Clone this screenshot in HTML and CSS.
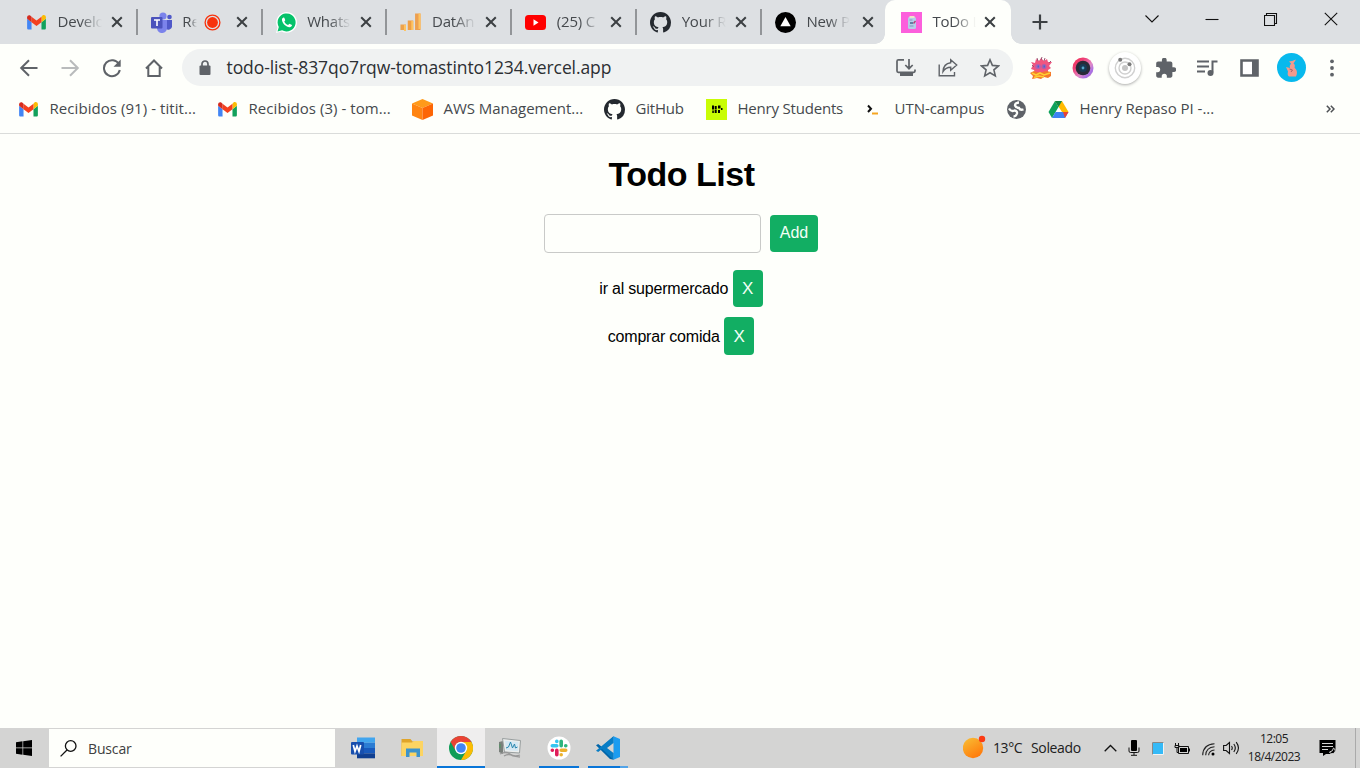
FILE: index.html
```html
<!DOCTYPE html>
<html lang="es">
<head>
<meta charset="utf-8">
<title>ToDo List</title>
<link rel="stylesheet" href="styles.css">
</head>
<body>
<svg class="defs" width="0" height="0">
  <defs>
    <linearGradient id="sun" x1="0" y1="0" x2=".6" y2="1"><stop offset="0" stop-color="#f8c136"/><stop offset="1" stop-color="#ff7b0c"/></linearGradient>
    <linearGradient id="lens" x1="0" y1="0" x2="1" y2="1"><stop offset="0" stop-color="#f5304f"/><stop offset=".3" stop-color="#ef3f76"/><stop offset=".6" stop-color="#e08ac8"/><stop offset=".8" stop-color="#a56fe8"/><stop offset="1" stop-color="#ffa05a"/></linearGradient>
  </defs>
  <symbol id="gmail" viewBox="0 0 20 16"><path fill="#4285f4" d="M1.500 15.500H4.700V7.600L0 4v10c0 .9.6 1.500 1.500 1.500z"/><path fill="#12a15c" d="M15.300 15.500h3.200c.9 0 1.500-.6 1.500-1.500V4l-4.700 3.600z"/><path fill="#fbbc04" d="M15.300 1.800v5.800L20 4V2.300c0-2-2.200-2.900-3.600-1.800z"/><path fill="#f4401f" d="M4.700 7.600V1.800L10 5.800l5.300-4v5.800L10 11.600z"/><path fill="#d52b1e" d="M0 2.300V4l4.700 3.600V1.800L3.600.7C2.200-.5 0 .4 0 2.300z"/></symbol>
  <symbol id="github" viewBox="0 0 16 16"><path fill="#24292f" d="M8 0C3.580 0 0 3.580 0 8c0 3.540 2.290 6.530 5.470 7.590.4.07.55-.17.55-.38 0-.19-.01-.82-.01-1.490-2.010.37-2.530-.49-2.690-.94-.09-.23-.48-.94-.82-1.130-.28-.15-.68-.52-.01-.53.63-.01 1.080.58 1.230.82.72 1.210 1.870.87 2.330.66.07-.52.28-.87.51-1.070-1.780-.2-3.640-.89-3.640-3.950 0-.87.31-1.590.82-2.150-.08-.2-.36-1.020.08-2.120 0 0 .67-.21 2.200.82.64-.18 1.320-.27 2-.27s1.360.09 2 .27c1.530-1.040 2.200-.82 2.200-.82.44 1.100.16 1.920.08 2.120.51.56.82 1.270.82 2.150 0 3.070-1.870 3.750-3.650 3.950.29.25.54.73.54 1.480 0 1.070-.01 1.930-.01 2.200 0 .21.15.46.55.38A8.010 8.010 0 0 0 16 8c0-4.420-3.580-8-8-8z"/></symbol>
  <symbol id="x" viewBox="0 0 12 12"><path d="M1.200 1.200l9.600 9.600M10.800 1.200L1.200 10.800" stroke="#3c4043" stroke-width="2" fill="none"/></symbol>
</svg>

<header class="browser">
  <div class="tabstrip">
    <div class="tab"><svg class="fav" viewBox="0 0 21 21"><use href="#gmail" x="1" y="3" width="19" height="15"/></svg><span class="title">Develo</span><svg class="close"><use href="#x"/></svg></div>
    <div class="tab"><svg class="fav" viewBox="0 0 21 21"><circle cx="12" cy="4" r="3.600" fill="#7b83eb"/><circle cx="18.500" cy="5" r="2.300" fill="#5059c9"/><path d="M15 8h6v7a4 4 0 0 1-6 2z" fill="#5059c9"/><path d="M6 8h10v7.500a5 5 0 0 1-10 1z" fill="#7b83eb"/><rect y="5" width="11.500" height="11.500" rx="1" fill="#4b53bc"/><path d="M3 8h6M6 8v6" stroke="#fff" stroke-width="1.600"/></svg><span class="title short">Re</span><svg class="rec" viewBox="0 0 17 17"><circle cx="8.500" cy="8.500" r="7.400" fill="none" stroke="#f8320c" stroke-width="1.300"/><circle cx="8.500" cy="8.500" r="5.400" fill="#f8320c"/></svg><svg class="close"><use href="#x"/></svg></div>
    <div class="tab"><svg class="fav" viewBox="0 0 21 21"><path d="M0 21l1.500-5.500A10.400 10.400 0 1 1 5.500 19.500z" fill="#fff"/><path d="M1.500 19.500l1.300-4.600a9 9 0 1 1 3.300 3.300z" fill="#05c26a"/><path d="M7.400 5.500c-1 .4-1.600 1.500-1.400 2.700.5 3.400 4.300 6.800 7.300 7 1.400.1 2.600-.7 2.700-2.100l-2.600-1.400-1.300 1.400c-1.800-.7-3-1.900-3.800-3.600l1-1.300-1-2.500z" fill="#fff"/></svg><span class="title">Whats</span><svg class="close"><use href="#x"/></svg></div>
    <div class="tab"><svg class="fav" viewBox="0 0 21 21"><g stroke-width="5.500" fill="none"><path d="M3.200 12.500V18" stroke="#eda24c"/><path d="M10.500 8.500V18" stroke="#ef9f45"/><path d="M17.800 1.500V18" stroke="#eda050"/></g><path d="M5 13v6M12.300 9v9M19.500 1.500V17" stroke="#ffc461" stroke-width="2"/></svg><span class="title">DatAn</span><svg class="close"><use href="#x"/></svg></div>
    <div class="tab"><svg class="fav" viewBox="0 0 21 21"><rect y="3" width="21" height="15" rx="3.500" fill="#f00"/><path d="M8.500 7.300l5 3.200-5 3.200z" fill="#fff"/></svg><span class="title">(25) C</span><svg class="close"><use href="#x"/></svg></div>
    <div class="tab"><svg class="fav"><use href="#github"/></svg><span class="title">Your R</span><svg class="close"><use href="#x"/></svg></div>
    <div class="tab last"><svg class="fav" viewBox="0 0 21 21"><circle cx="10.500" cy="10.500" r="10.500"/><path d="M10.500 5l5.200 9.300H5.300z" fill="#fff"/></svg><span class="title">New P</span><svg class="close"><use href="#x"/></svg></div>
    <div class="tab active"><svg class="fav" viewBox="0 0 21 21"><path fill="#fc5fdc" d="M0 0h21v21H0z"/><rect x="7" y="5" width="8" height="12" rx="1.500" fill="#b4cfe8"/><rect x="8.500" y="4" width="5" height="2" fill="#ede6c8"/><path d="M8.500 8h3M8.500 14h4" stroke="#8296bd"/><path d="M9 11h3" stroke="#3e5d86" stroke-width="1.400"/><path d="M12.500 11.500l2-2.500" stroke="#b53f78" stroke-width="1.400"/></svg><span class="title">ToDo L</span><svg class="close"><use href="#x"/></svg></div>
    <svg class="newtab" viewBox="0 0 16 16"><path d="M8 .5v15M.5 8h15" stroke="#3c4043" stroke-width="2.200"/></svg>
    <div class="window-controls">
      <svg viewBox="0 0 14 14"><path d="M.5 3.500L7 10l6.500-6.500"/></svg>
      <svg viewBox="0 0 14 14"><path d="M.5 7.500h13"/></svg>
      <svg viewBox="0 0 14 14"><path d="M.5 3.500h10v10h-10zM2.500 3.500v-2h10v10h-2"/></svg>
      <svg viewBox="0 0 14 14"><path d="M.8.8l12.400 12.400M13.200.8L.8 13.200"/></svg>
    </div>
  </div>

  <div class="toolbar">
    <nav class="nav">
      <svg viewBox="0 0 20 20"><path d="M18.500 10H2.500M10 2.200L2.200 10l7.800 7.800"/></svg>
      <svg class="disabled" viewBox="0 0 20 20"><path d="M1.500 10h16M10 2.200l7.800 7.800-7.800 7.800"/></svg>
      <svg viewBox="0 0 20 20"><path d="M17 6.300A8 8 0 1 0 17.800 12"/><path d="M18.700 1.500v7.200h-7.200z" fill="#5f6368" stroke="none"/></svg>
      <svg viewBox="0 0 20 20"><path d="M2 10.500l8-8 8 8M4.300 9v9h11.400V9"/></svg>
    </nav>
    <div class="omnibox">
      <svg class="lock" viewBox="0 0 12 16"><path d="M3 7V4a3 3 0 0 1 6 0v3" fill="none" stroke="#5f6368" stroke-width="1.700"/><rect x=".5" y="5.600" width="11" height="9.400" rx="1" fill="#5f6368"/></svg>
      <span class="url">todo-list-837qo7rqw-tomastinto1234.vercel.app</span>
      <div class="page-actions">
        <svg viewBox="0 0 20 20"><path d="M8 1.800H2.500Q1 1.800 1 3.300v9.700q0 1.300 1.300 1.300h15.400q1.300 0 1.300-1.300v-1.500M13 1v9.500M9.300 7l3.700 3.700L16.700 7" stroke-width="1.700"/><path d="M4 15h13v3H4z" fill="#5f6368" stroke="none"/></svg>
        <svg viewBox="0 0 20 20"><path d="M1.200 6.500v11.300h15.300V14M12.700 1.800l6 5.200-6 5.200V9.300q-5 0-7.700 4.200.5-8 7.700-8.800z" stroke-width="1.400"/></svg>
        <svg viewBox="0 0 20 20"><path d="M10 1.800l2.400 5.600 6.100.5-4.600 4 1.400 6L10 14.700l-5.300 3.200 1.400-6-4.600-4 6.100-.5z" stroke-width="1.600"/></svg>
      </div>
    </div>
    <div class="extensions">
      <svg class="monster" viewBox="0 0 22 22"><path d="M3 8L1 5l4 1 1-4 3 2 2-3 3 3 3-2 1 3h4l-3 4 2 2-3 2v3H5l-1-3-3-1z" fill="#f0567f"/><path d="M7 1l1 3M12 0l-1 3M15 1l-1 3M19 6l2-2M2 8l2 2" stroke="#9a5373" fill="none"/><ellipse cx="8" cy="9.500" rx="2.800" ry="2.500" fill="#b061b4"/><ellipse cx="14" cy="9.500" rx="2.500" ry="2.500" fill="#a85fb0"/><path d="M7.500 9.500h1.500M13.500 9.500h1.500" stroke="#3f6fd0" stroke-width="1.800"/><path d="M0 16l4-2 6 2 6-2 5 1v4l-3 2-4-1-3 2-4-1-5 1 1-3z" fill="#f4792a"/><path d="M2 16l4 2 4-2 4 2 6-2M4 20.500l5-1.500 5 1" stroke="#ffcf34" stroke-width="1.600" fill="none"/></svg>
      <svg class="camera" viewBox="0 0 22 22"><circle cx="11" cy="11" r="10.500" fill="url(#lens)"/><circle cx="11" cy="11" r="7.300" fill="#282b38"/><circle cx="11" cy="11" r="4" fill="#183b55"/><circle cx="11" cy="11" r="1.400" fill="#55a5ca"/></svg>
      <svg class="orbit" viewBox="0 0 32 32"><circle cx="16" cy="16" r="15.500" fill="#fff"/><g fill="none" stroke="#d0d0d0" stroke-width="1.400"><circle cx="16" cy="16" r="9.700"/><circle cx="16" cy="16" r="6"/></g><circle cx="16" cy="16" r="3" fill="#c5c5c5"/><circle cx="11.200" cy="7.800" r="2" fill="#7a7a7a"/><circle cx="20.500" cy="12.300" r="2" fill="#7a7a7a"/></svg>
      <svg class="puzzle" viewBox="1.800 1.300 21 21"><path fill="#5f6368" d="M20.500 11H19V7c0-1.100-.9-2-2-2h-4V3.500a2.500 2.500 0 0 0-5 0V5H4c-1.100 0-2 .9-2 2v3.800h1.500a2.700 2.700 0 0 1 0 5.400H2V20c0 1.100.9 2 2 2h3.800v-1.500a2.700 2.700 0 0 1 5.400 0V22H17c1.100 0 2-.9 2-2v-4h1.500a2.500 2.500 0 0 0 0-5z"/></svg>
      <svg class="music" viewBox="0 0 22 18"><path d="M1 2.500h12M1 7.500h12M1 12.500h8M21.500 2.500h-5v11" fill="none" stroke="#5f6368" stroke-width="2"/><circle cx="14.500" cy="14" r="3" fill="#5f6368"/></svg>
      <svg class="panel" viewBox="0 0 19 18"><path d="M1.500 1.500h16v15h-16z" fill="#fff" stroke="#5f6368" stroke-width="2.600"/><path fill="#5f6368" d="M12 1h6v16h-6z"/></svg>
      <svg class="avatar" viewBox="0 0 29 29"><circle cx="14.500" cy="14.500" r="14.500" fill="#08b9ed"/><path d="M14 10.500L12 8.500l3-.5 4-1.500-2.500 4q2 1 1 4 4 4 1.500 9h-7q-2-1-1-5L9 14l4 1q-1-2 1-4.500z" fill="#f39a8e"/><path d="M12.500 16l3 1-1.500 2" stroke="#a86268" fill="none"/></svg>
      <svg class="dots" viewBox="0 0 4 18"><circle cx="2" cy="2.300" r="1.900"/><circle cx="2" cy="9" r="1.900"/><circle cx="2" cy="15.700" r="1.900"/></svg>
    </div>
  </div>

  <div class="bookmarks">
    <a><svg viewBox="0 0 21 21"><use href="#gmail" x="1" y="3" width="19" height="15"/></svg><span class="b1">Recibidos (91) - titit...</span></a>
    <a><svg viewBox="0 0 21 21"><use href="#gmail" x="1" y="3" width="19" height="15"/></svg><span class="b2">Recibidos (3) - tom...</span></a>
    <a><svg viewBox="0 0 21 21"><path d="M10.500 0L21 4.500 10.500 9 0 4.500z" fill="#ff9a1a"/><path d="M0 4.500L10.500 9v12L0 16.500z" fill="#ff8411"/><path d="M21 4.500L10.500 9v12L21 16.500z" fill="#fd6505"/></svg><span class="b3">AWS Management...</span></a>
    <a><svg><use href="#github"/></svg><span class="b4">GitHub</span></a>
    <a><svg viewBox="0 0 21 21"><path fill="#c9fd05" d="M0 0h21v21H0z"/><path d="M6 6.500h2v4H6zM8.700 7h2v3.500h-2zM12 6.500h2.500v3H12zM6.300 11.500h1.500v2.500H6.300zM8.700 11h2v3h-2zM12 11h2v3h-2zM15 9h1.500v2H15z"/></svg><span class="b5">Henry Students</span></a>
    <a><svg viewBox="0 0 21 21"><path d="M5 6.500l3 3.200L5 13" fill="none" stroke="#111" stroke-width="2"/><path d="M9 14.500h6" stroke="#f6a622" stroke-width="2"/></svg><span class="b6">UTN-campus</span></a>
    <a><svg viewBox="0 0 21 21"><circle cx="10.500" cy="10.500" r="9.500" fill="#5f6368"/><path d="M3 9.500q2 3.500 5.500 2 3 .5 2.500 3-1 3-3.500 3M13 3.500q-4 0-4 3 1 2.500 4 2.500 1 2.500 4.500 1.500" fill="none" stroke="#fefffb" stroke-width="2.300"/></svg></a>
    <a><svg viewBox="0 0 21 21"><path d="M7 2h7l6.500 11H14z" fill="#ffba00"/><path d="M7 2l3.500 6L4 19 .5 13z" fill="#0fa25b"/><path d="M7.500 13h13L17 19H4z" fill="#3d82f3"/><path d="M7 2h7l-3.500 6z" fill="#128843"/><path d="M15 13h5.500L17 19z" fill="#eb4335"/></svg><span class="b8">Henry Repaso PI -...</span></a>
    <svg class="more" viewBox="0 0 9 8"><path d="M.8.8L4 4 .8 7.200M4.800.8L8 4 4.800 7.200"/></svg>
  </div>
</header>

<main class="app">
  <h1>Todo List</h1>
  <form class="add-form"><input type="text" aria-label="Tarea"><button type="button" class="btn add">Add</button></form>
  <ul class="todos">
    <li><span>ir al supermercado</span><button class="btn">X</button></li>
    <li><span>comprar comida</span><button class="btn">X</button></li>
  </ul>
</main>

<footer class="taskbar">
  <div class="start"><svg viewBox="0 0 16 16"><path d="M0 2.200L6.500 1.300V7.600H0zM7.200 1.200L16 0v7.600H7.200zM0 8.300h6.500v6.400L0 13.800zM7.200 8.300H16V16l-8.800-1.200z"/></svg></div>
  <div class="search"><svg viewBox="0 0 17 17"><circle cx="10.700" cy="6" r="5.300"/><path d="M7 10L.6 16.400"/></svg><span>Buscar</span></div>
  <div class="apps">
    <div><svg viewBox="0 0 24 24"><path d="M6 1.500h18v5.300H6z" fill="#41a5ee"/><path d="M6 6.800h18V12H6z" fill="#2b7cd3"/><path d="M6 12h18v5.300H6z" fill="#185abd"/><path d="M6 17.300h18v5H6z" fill="#103f91"/><rect y="6" width="13" height="12.500" rx="1" fill="#174fae"/><path d="M2.300 9l1.700 6.500L6 10l2 5.500L9.700 9" fill="none" stroke="#fff" stroke-width="1.700"/></svg></div>
    <div><svg viewBox="0 0 24 24"><path d="M1.500 3h9l2 2.500H23V20H1.500z" fill="#e0a52a"/><path d="M1.500 6.500H12l2-1.500h9v15H1.500z" fill="#fcd462"/><path d="M6 21v-8.500h14V21h-3.500v-4.500h-7V21z" fill="#3d93cb"/></svg></div>
    <div class="current"><svg viewBox="0 0 24 24"><circle cx="12" cy="12" r="12" fill="#109d58"/><path d="M1.600 6A12 12 0 0 1 22.400 6H12a6 6 0 0 0-5.200 9z" fill="#ea4335"/><path d="M22.400 6A12 12 0 0 1 12 24l5.200-9A6 6 0 0 0 12 6z" fill="#fbbc05"/><circle cx="12" cy="12" r="6.200" fill="#fff"/><circle cx="12" cy="12" r="4.800" fill="#4285f4"/></svg></div>
    <div><svg viewBox="0 0 24 24"><path d="M1 6l4-1v13l-4-2z" fill="#797f7b"/><path d="M2 8v4" stroke="#4b9a60"/><path d="M4.500 2.500l18 2-1 12.500-15-1z" fill="#eceeed" stroke="#989e9e"/><path d="M7 4.800l13.500 1.200-.7 9L8 14z" fill="#d5e8f3"/><path d="M8 12l2.500-1 2-5 2 6 2-4 1 4 2-1" fill="none" stroke="#2887af"/><path d="M2 18q6-3 10 0t10 1M6 20q5-3 9 0l7 1" fill="none" stroke="#999" stroke-width="1.300"/></svg></div>
    <div class="running"><svg viewBox="0 0 24 24"><circle cx="12" cy="12" r="11.500" fill="#fff"/><g fill="none" stroke-width="3.600" stroke-linecap="round"><path d="M9.800 5.300v.1M5.300 9.800h4.500" stroke="#36c5f0"/><path d="M14.200 5.300v4.500M18.700 9.800h.1" stroke="#2eb67d"/><path d="M14.200 14.200h4.500M14.200 18.700v.1" stroke="#ecb22e"/><path d="M9.800 14.200v4.500M5.300 14.200h.1" stroke="#e01e5a"/></g></svg></div>
    <div class="running multi"><svg viewBox="0 0 24 24"><path d="M17.500.2L6 11 2.200 8 0 9.200 14 23l3.500.8z" fill="#0065a9"/><path d="M17.500 23.800L6 13l-3.800 3L0 14.800 17.500.2z" fill="#087dc5"/><path d="M17.500.2L24 3v18l-6.500 2.800z" fill="#1c9cf0"/><path d="M17.500 7v10L11 12z" fill="#d4d4d3"/></svg></div>
  </div>
  <div class="tray">
    <svg class="weather" viewBox="0 0 24 24"><circle cx="10" cy="13" r="10.200" fill="url(#sun)"/><circle cx="19" cy="4" r="3.200" fill="#fb3b13"/></svg>
    <span class="temp">13°C</span><span class="sky">Soleado</span>
    <svg class="chev" viewBox="0 0 13 8"><path d="M.7 7.300L6.500 1.500l5.800 5.800" fill="none" stroke="#111" stroke-width="1.300"/></svg>
    <svg class="mic" viewBox="0 0 12 16"><rect x="3" width="6" height="11" rx="1"/><path d="M1 7.500V11q0 1.500 1.500 1.500h7Q11 12.500 11 11V7.500M6 12.500V15M3 15.300h6" fill="none" stroke="#111"/></svg>
    <svg class="note" viewBox="0 0 12 13"><path d="M.5.500h11v12H.5z" fill="#35baf7" stroke="#f3f3f3"/><path d="M.5 12.500V.5h11" fill="none" stroke="#888"/></svg>
    <svg class="battery" viewBox="0 0 17 13"><path d="M4.500 4.500h10v7h-10zM15.500 6.500v3M1.500 1v2M4.500 1v2M1 3.500h4v2H1zM3 5.500v5h2" fill="none" stroke="#111"/><path d="M6 6h7v4H6z"/></svg>
    <svg class="wifi" viewBox="0 0 13 13"><path d="M.7 12.300Q1 1.500 12.500.8M3.700 12.300Q4 4.500 12.500 3.800M6.600 12.300Q7 7.500 12.500 7" fill="none" stroke="#222" stroke-width="1.100"/><circle cx="11" cy="11" r="1.500"/></svg>
    <svg class="sound" viewBox="0 0 17 14"><path d="M.6 4.500h2.500L6.500 1.500v11L3.100 9.500H.6zM8.500 5q1.500 2 0 4M10.800 3q3 4 0 8M13.200 1.200q4.500 5.800 0 11.600" fill="none" stroke="#111" stroke-width="1.100"/></svg>
    <div class="clock"><span>12:05</span><span class="date">18/4/2023</span></div>
    <svg class="notify" viewBox="0 0 17 16"><path d="M.5 0h16v11L11 14H7l-3 2v-3H.5z"/><path d="M3 3.500h11M3 6.500h11M3 9.500h6" stroke="#d5d5d5" stroke-width="1.200"/><path d="M14.500 8a3 3 0 1 1-4 4 4.500 4.500 0 0 0 4-4z" stroke="#d5d5d5"/></svg>
    <div class="desktop"></div>
  </div>
</footer>
</body>
</html>
```

FILE: styles.css
```css
* { box-sizing: border-box; }
body {
  margin: 0; width: 1360px; height: 768px; overflow: hidden;
  display: flex; flex-direction: column;
  background: #fefffb; color: #000;
  font-family: "Open Sans", "Noto Sans", sans-serif;
}
svg { display: block; flex: none; }
.defs { position: absolute; }
.browser { height: 134px; flex: none; border-bottom: 1px solid #dadcda; color: #45494d; }

/* Tabs */
.tabstrip { height: 44px; display: flex; align-items: center; background: #dde0e3; padding-left: 13px; }
.tab { width: 124.830px; height: 26px; display: flex; align-items: center; padding: 0 13px 0 13px; border-right: 2px solid #929598; }
.tab.last { width: 123px; padding-right: 13px; border-right: 0; }
.tab.active { position: relative; width: 126px; height: 44px; padding: 0 15px 0 16px; border: 0; background: #fefffb; border-radius: 10px 10px 0 0; }
.tab.active::before, .tab.active::after { content: ""; position: absolute; bottom: 0; width: 10px; height: 10px; }
.tab.active::before { left: -10px; background: radial-gradient(circle at 0 0, transparent 9.5px, #fefffb 10px); }
.tab.active::after { right: -10px; background: radial-gradient(circle at 100% 0, transparent 9.5px, #fefffb 10px); }
.fav { width: 21px; height: 21px; }
.title {
  width: 44px; margin: -2px 0 0 10.500px; white-space: nowrap; font-size: 15px; line-height: 24px; letter-spacing: -.2px;
  -webkit-mask-image: linear-gradient(90deg, #000 50%, transparent 100%); mask-image: linear-gradient(90deg, #000 50%, transparent 100%);
}
.title.short { width: 15px; }
.rec { width: 17px; height: 17px; margin-left: 7px; }
.close { width: 12px; height: 12px; margin-left: auto; }
.last .close { margin-left: 12px; }
.newtab { width: 16px; height: 16px; margin-left: 21px; }
.window-controls { display: flex; gap: 45.500px; margin: -7px 22.500px 0 auto; }
.window-controls svg { width: 14px; height: 14px; fill: none; stroke: #111; stroke-width: 1.1; }

/* Toolbar */
.toolbar { height: 47px; display: flex; align-items: center; }
.nav { display: flex; gap: 21.700px; width: 182px; padding-left: 18.500px; }
.nav svg, .page-actions svg { width: 20px; height: 20px; fill: none; stroke: #5f6368; stroke-width: 2; }
.nav .disabled { stroke: #b9bbbc; }
.omnibox { width: 831px; height: 37px; border-radius: 19px; background: #f0f2f2; display: flex; align-items: center; padding: 0 13.500px 0 17px; }
.lock { width: 12px; height: 16px; }
.url { margin: -1px 0 0 15.500px; font-size: 17.500px; line-height: 24px; color: #2c2f33; white-space: nowrap; letter-spacing: -.09px; }
.page-actions { display: flex; gap: 21.700px; margin-left: auto; }
.extensions { display: flex; align-items: center; flex: 1; }
.monster { width: 22px; height: 22px; margin-left: 17px; }
.camera { width: 22px; height: 22px; margin-left: 20px; }
.orbit { width: 32px; height: 32px; margin-left: 15px; border-radius: 50%; box-shadow: 0 1px 3px #aaa; }
.puzzle { width: 20px; height: 20px; margin-left: 15px; }
.music { width: 22px; height: 18px; margin-left: 20px; }
.panel { width: 19px; height: 18px; margin-left: 22px; }
.avatar { width: 29px; height: 29px; margin-left: 18px; }
.dots { width: 4px; height: 18px; margin-left: 24px; fill: #5f6368; }

/* Bookmarks */
.bookmarks { height: 36px; padding-left: 18px; display: grid; grid-template-columns: 199px 195px 192px 102px 157px 143px 42px 278px auto; align-items: center; }
.bookmarks a { display: flex; align-items: center; gap: 10.500px; }
.bookmarks a svg { width: 21px; height: 21px; }
.bookmarks span { margin-top: -2px; font-size: 15px; line-height: 24px; white-space: nowrap; letter-spacing: -.2px; }
.bookmarks .b1, .bookmarks .b2 { letter-spacing: .06px; }
.bookmarks .b3, .bookmarks .b8 { letter-spacing: -.03px; }
.bookmarks .b6 { letter-spacing: -.03px; }
.more { width: 9px; height: 8px; fill: none; stroke: #4d5054; stroke-width: 1.500; }

/* Todo app */
.app { flex: 1; display: flex; flex-direction: column; align-items: center; padding-left: 2px; font-family: "Liberation Sans", Arial, sans-serif; }
.app h1 { margin: 20px 0 0; padding-left: 1px; font-size: 34px; line-height: 40px; letter-spacing: -.5px; }
.add-form { display: flex; align-items: center; gap: 9px; margin-top: 20px; }
.add-form input { width: 217px; height: 39px; border: 1px solid #c9cac8; border-radius: 4px; background: #fefffb; padding: 9px; }
.btn { width: 30px; height: 37px; padding: 0; border: 0; border-radius: 4px; background: #12ae63; color: #f3fff6; font: 17px/37px "Liberation Sans", Arial, sans-serif; }
.btn.add { width: 48px; padding-bottom: 2px; font-size: 16px; line-height: 35px; }
.todos { list-style: none; margin: 17px 0 0; padding: 0; display: flex; flex-direction: column; align-items: center; gap: 10px; }
.todos li { display: flex; align-items: center; gap: 4.500px; font-size: 16px; line-height: 37px; letter-spacing: -.2px; }
.todos li:last-child .btn { height: 38px; }

/* Taskbar */
.taskbar { height: 40px; flex: none; display: flex; background: #d4d4d3; color: #202020; }
.start { width: 49px; display: flex; align-items: center; padding-left: 16px; }
.start svg { width: 16px; height: 16px; }
.search { width: 286px; margin: 1px 0; background: #fefffb; display: flex; align-items: center; padding-left: 11px; gap: 11px; font-size: 14px; color: #404040; }
.search svg { width: 17px; height: 17px; fill: none; stroke: #111; stroke-width: 1.300; }
.search span { letter-spacing: -.15px; }
.apps { display: flex; gap: 1px; padding-left: 4px; }
.apps div { width: 48px; display: flex; justify-content: center; align-items: center; }
.apps svg { width: 24px; height: 24px; }
.apps .current { background: linear-gradient(#efeeee 38px, #0975d8 38px); }
.apps .running { background: linear-gradient(#0975d8, #0975d8) center bottom / 40px 2px no-repeat; }
.apps .multi { background: linear-gradient(90deg, #0975d8 32px, #53a4e8 32px) center bottom / 40px 2px no-repeat; }
.tray { display: flex; align-items: center; margin-left: auto; font-size: 14px; }
.weather { width: 24px; height: 24px; margin-top: -2px; }
.temp { margin-left: 6px; width: 38px; white-space: nowrap; letter-spacing: -.4px; }
.sky { width: 73px; letter-spacing: -.35px; }
.temp, .sky { margin-top: -1px; }
.chev { width: 13px; height: 8px; }
.mic { width: 12px; height: 16px; margin-left: 11px; }
.note { width: 12px; height: 13px; margin-left: 12px; }
.battery { width: 17px; height: 13px; margin-left: 10px; }
.wifi { width: 13px; height: 13px; margin: 2px 0 0 11px; }
.sound { width: 17px; height: 14px; margin-left: 8px; }
.clock { width: 56px; margin-left: 6px; display: flex; flex-direction: column; align-items: center; font-size: 12px; line-height: 18px; letter-spacing: -.5px; white-space: nowrap; }
.notify { width: 17px; height: 16px; margin-left: 17px; }
.desktop { width: 5px; height: 40px; margin-left: 19px; border-left: 1px solid #aaa; }
```
